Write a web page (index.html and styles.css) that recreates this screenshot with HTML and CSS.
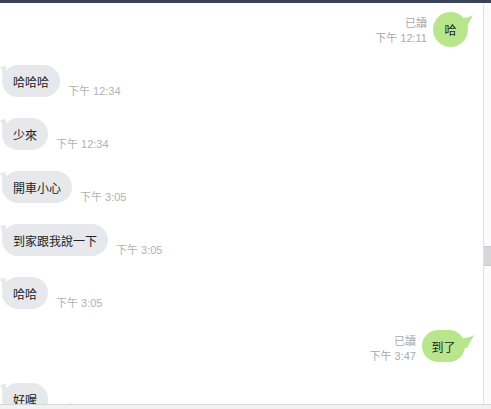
FILE: index.html
```html
<!DOCTYPE html>
<html lang="zh-Hant">
<head>
<meta charset="utf-8">
<link rel="stylesheet" href="styles.css">
</head>
<body>
<div class="app">
  <div class="topbar"></div>
  <div class="main">
    <div class="chat">
      <div class="row out">
        <div class="meta"><span>已讀</span><span>下午 12:11</span></div>
        <div class="bubble green round">哈<svg class="tail" width="14" height="16" viewBox="0 0 14 16"><path d="M0 4 Q7 5 13 1 Q10 7 6 14 L0 14 Z"/></svg></div>
      </div>
      <div class="row in">
        <div class="bubble grey">哈哈哈<svg class="tail" width="6" height="10" viewBox="0 0 6 10"><path d="M6 0 L6 10 L2 10 Q3 5 0 1 Z"/></svg></div>
        <span class="time">下午 12:34</span>
      </div>
      <div class="row in">
        <div class="bubble grey">少來<svg class="tail" width="6" height="10" viewBox="0 0 6 10"><path d="M6 0 L6 10 L2 10 Q3 5 0 1 Z"/></svg></div>
        <span class="time">下午 12:34</span>
      </div>
      <div class="row in">
        <div class="bubble grey">開車小心<svg class="tail" width="6" height="10" viewBox="0 0 6 10"><path d="M6 0 L6 10 L2 10 Q3 5 0 1 Z"/></svg></div>
        <span class="time">下午 3:05</span>
      </div>
      <div class="row in">
        <div class="bubble grey">到家跟我說一下<svg class="tail" width="6" height="10" viewBox="0 0 6 10"><path d="M6 0 L6 10 L2 10 Q3 5 0 1 Z"/></svg></div>
        <span class="time">下午 3:05</span>
      </div>
      <div class="row in">
        <div class="bubble grey">哈哈<svg class="tail" width="6" height="10" viewBox="0 0 6 10"><path d="M6 0 L6 10 L2 10 Q3 5 0 1 Z"/></svg></div>
        <span class="time">下午 3:05</span>
      </div>
      <div class="row out">
        <div class="meta"><span>已讀</span><span>下午 3:47</span></div>
        <div class="bubble green wide">到了<svg class="tail" width="14" height="16" viewBox="0 0 14 16"><path d="M0 4 Q7 5 13 1 Q10 7 6 14 L0 14 Z"/></svg></div>
      </div>
      <div class="row in">
        <div class="bubble grey">好喔<svg class="tail" width="6" height="10" viewBox="0 0 6 10"><path d="M6 0 L6 10 L2 10 Q3 5 0 1 Z"/></svg></div>
        <span class="time">下午 3:48</span>
      </div>
    </div>
    <div class="scrollbar"><div class="thumb"></div></div>
  </div>
  <div class="footer"></div>
</div>
</body>
</html>
```
FILE: styles.css
```css
html, body {
  margin: 0;
  padding: 0;
  background: #fff;
}
.app {
  width: 491px;
  height: 409px;
  display: flex;
  flex-direction: column;
  overflow: hidden;
  font-family: "Noto Sans CJK TC", "Noto Sans", sans-serif;
}
.topbar {
  height: 3px;
  background: #3b4356;
  flex: none;
}
.main {
  flex: 1;
  display: flex;
  min-height: 0;
}
.chat {
  flex: 1;
  display: flex;
  flex-direction: column;
  gap: 21px;
  padding: 9px 15px 0 1px;
  overflow: hidden;
}
.row {
  display: flex;
  align-items: flex-end;
  flex: none;
}
.row.out {
  justify-content: flex-end;
}
.bubble {
  position: relative;
  height: 32px;
  display: flex;
  align-items: center;
  font-size: 12px;
  color: #222;
  border-radius: 16px;
  flex: none;
}
.bubble.grey {
  background: #e6e8eb;
  padding: 0 11px;
  margin-left: 1px;
}
.bubble.green {
  background: #b9e68d;
  padding: 0 9.5px;
  height: 32px;
}
.bubble.wide {
  margin-right: 3px;
}
.bubble.round {
  width: 35px;
  height: 35px;
  padding: 0;
  justify-content: center;
  border-radius: 50%;
  margin-bottom: -3px;
}
.tail {
  position: absolute;
  top: 0;
}
.green .tail {
  right: -6px;
  top: 2px;
  fill: #b9e68d;
}
.wide .tail {
  right: -10px;
  top: 4px;
}
.grey .tail {
  left: -2px;
  top: 1px;
  fill: #e6e8eb;
}
.time {
  font-size: 11px;
  line-height: 15px;
  color: #b2b2b2;
  margin-left: 8px;
  margin-bottom: -2px;
  font-family: "Liberation Sans", "Noto Sans CJK TC", sans-serif;
  white-space: nowrap;
}
.meta {
  display: flex;
  flex-direction: column;
  align-items: flex-end;
  margin-right: 6px;
  margin-bottom: -2px;
  font-size: 11px;
  line-height: 15px;
  color: #aaa;
  font-family: "Liberation Sans", "Noto Sans CJK TC", sans-serif;
}
.scrollbar {
  width: 7px;
  flex: none;
  border-left: 1px solid #e2e2e2;
  background: #fbfbfb;
  padding-top: 243px;
}
.thumb {
  height: 18px;
  background: #d7d7da;
  border-top: 1px solid #c9c9cc;
  border-bottom: 1px solid #c9c9cc;
}
.footer {
  height: 4px;
  flex: none;
  border-top: 1px solid #d6d6d6;
  background: #f1f1f1;
}
```
